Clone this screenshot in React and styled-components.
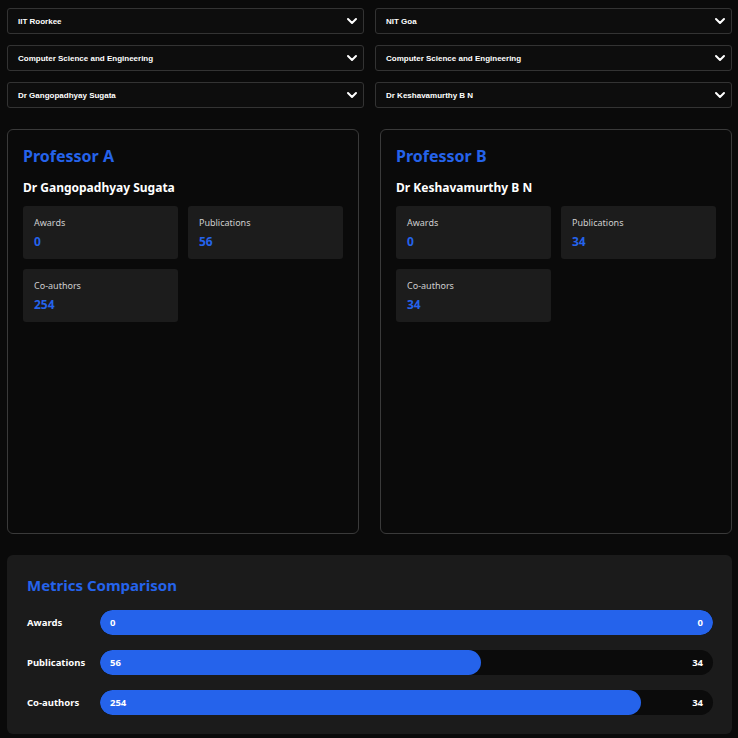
import React from 'react';
import styled, { createGlobalStyle } from 'styled-components';
import { ChevronDown } from 'lucide-react';

const GlobalStyle = createGlobalStyle`
  html, body {
    margin: 0;
    padding: 0;
    background: #0a0a0a;
  }
  body {
    font-family: "Noto Sans", "Open Sans", sans-serif;
    color: #fff;
  }
`;

const Page = styled.div`
  padding: 8px 6px 4px 7px;
  display: flex;
  flex-direction: column;
  gap: 21px;
`;

const SelectGrid = styled.div`
  display: grid;
  grid-template-columns: 1fr 1fr;
  column-gap: 11px;
  row-gap: 11px;
`;

const SelectBox = styled.div`
  height: 26px;
  box-sizing: border-box;
  border: 1px solid #333;
  border-radius: 3px;
  background: #0d0d0d;
  display: flex;
  align-items: center;
  justify-content: space-between;
  padding: 0 3px 0 10px;
  font-family: "Liberation Sans", Arial, sans-serif;
  font-size: 8px;
  font-weight: 700;
  color: #fff;
`;

const Chevron = styled(ChevronDown)`
  color: #fff;
`;

const CardRow = styled.div`
  display: grid;
  grid-template-columns: 1fr 1fr;
  gap: 21px;
`;

const Card = styled.div`
  height: 405px;
  box-sizing: border-box;
  border: 1px solid #3a3a3a;
  border-radius: 6px;
  padding: 15px 15px;
`;

const CardTitle = styled.h2`
  margin: 0 0 13px;
  font-size: 16px;
  font-weight: 700;
  color: #2563eb;
  line-height: 22px;
`;

const ProfName = styled.div`
  font-size: 12px;
  font-weight: 700;
  line-height: 16px;
  margin-bottom: 10px;
`;

const StatGrid = styled.div`
  display: grid;
  grid-template-columns: 1fr 1fr;
  gap: 10px;
`;

const Stat = styled.div`
  height: 53px;
  box-sizing: border-box;
  background: #1c1c1c;
  border-radius: 3px;
  padding: 10px 11px 0;
`;

const StatLabel = styled.div`
  font-size: 9px;
  color: #cfcfcf;
  line-height: 13px;
  margin-bottom: 5px;
`;

const StatValue = styled.div`
  font-size: 12px;
  font-weight: 700;
  color: #2563eb;
  line-height: 16px;
`;

const Metrics = styled.div`
  background: #1b1b1b;
  border-radius: 6px;
  padding: 20px 19px 19px 20px;
  display: flex;
  flex-direction: column;
  gap: 15px;
`;

const MetricsTitle = styled.h3`
  margin: 0;
  font-size: 15px;
  font-weight: 700;
  color: #2563eb;
  line-height: 20px;
`;

const BarRow = styled.div`
  display: grid;
  grid-template-columns: 73px 1fr;
  align-items: center;
`;

const BarLabel = styled.div`
  font-size: 9.5px;
  font-weight: 700;
  color: #fff;
`;

const Track = styled.div`
  position: relative;
  height: 25px;
  border-radius: 13px;
  background: #0b0b0b;
  overflow: hidden;
  display: flex;
  align-items: center;
  justify-content: space-between;
  padding: 0 10px;
  font-size: 9.5px;
  font-weight: 700;
`;

const Fill = styled.div`
  position: absolute;
  left: 0;
  top: 0;
  bottom: 0;
  background: #2563eb;
  border-radius: 13px;
`;

const BarValue = styled.span`
  position: relative;
  color: #fff;
`;

const selects = [
  ['IIT Roorkee', 'NIT Goa'],
  ['Computer Science and Engineering', 'Computer Science and Engineering'],
  ['Dr Gangopadhyay Sugata', 'Dr Keshavamurthy B N'],
];

const profs = [
  { title: 'Professor A', name: 'Dr Gangopadhyay Sugata', awards: 0, pubs: 56, coauthors: 254 },
  { title: 'Professor B', name: 'Dr Keshavamurthy B N', awards: 0, pubs: 34, coauthors: 34 },
];

const metrics = [
  { label: 'Awards', key: 'awards' },
  { label: 'Publications', key: 'pubs' },
  { label: 'Co-authors', key: 'coauthors' },
];

const ProfessorCard = ({ prof }) => (
  <Card>
    <CardTitle>{prof.title}</CardTitle>
    <ProfName>{prof.name}</ProfName>
    <StatGrid>
      <Stat>
        <StatLabel>Awards</StatLabel>
        <StatValue>{prof.awards}</StatValue>
      </Stat>
      <Stat>
        <StatLabel>Publications</StatLabel>
        <StatValue>{prof.pubs}</StatValue>
      </Stat>
      <Stat>
        <StatLabel>Co-authors</StatLabel>
        <StatValue>{prof.coauthors}</StatValue>
      </Stat>
    </StatGrid>
  </Card>
);

export default function App() {
  const [a, b] = profs;
  return (
    <>
      <GlobalStyle />
      <Page>
        <SelectGrid>
          {selects.flat().map((text, i) => (
            <SelectBox key={i}>
              <span>{text}</span>
              <Chevron size={16} strokeWidth={3} />
            </SelectBox>
          ))}
        </SelectGrid>

        <CardRow>
          <ProfessorCard prof={a} />
          <ProfessorCard prof={b} />
        </CardRow>

        <Metrics>
          <MetricsTitle>Metrics Comparison</MetricsTitle>
          {metrics.map((m) => {
            const va = a[m.key];
            const vb = b[m.key];
            const pct = va + vb === 0 ? 100 : (va / (va + vb)) * 100;
            return (
              <BarRow key={m.key}>
                <BarLabel>{m.label}</BarLabel>
                <Track>
                  <Fill style={{ width: `${pct}%` }} />
                  <BarValue>{va}</BarValue>
                  <BarValue>{vb}</BarValue>
                </Track>
              </BarRow>
            );
          })}
        </Metrics>
      </Page>
    </>
  );
}
